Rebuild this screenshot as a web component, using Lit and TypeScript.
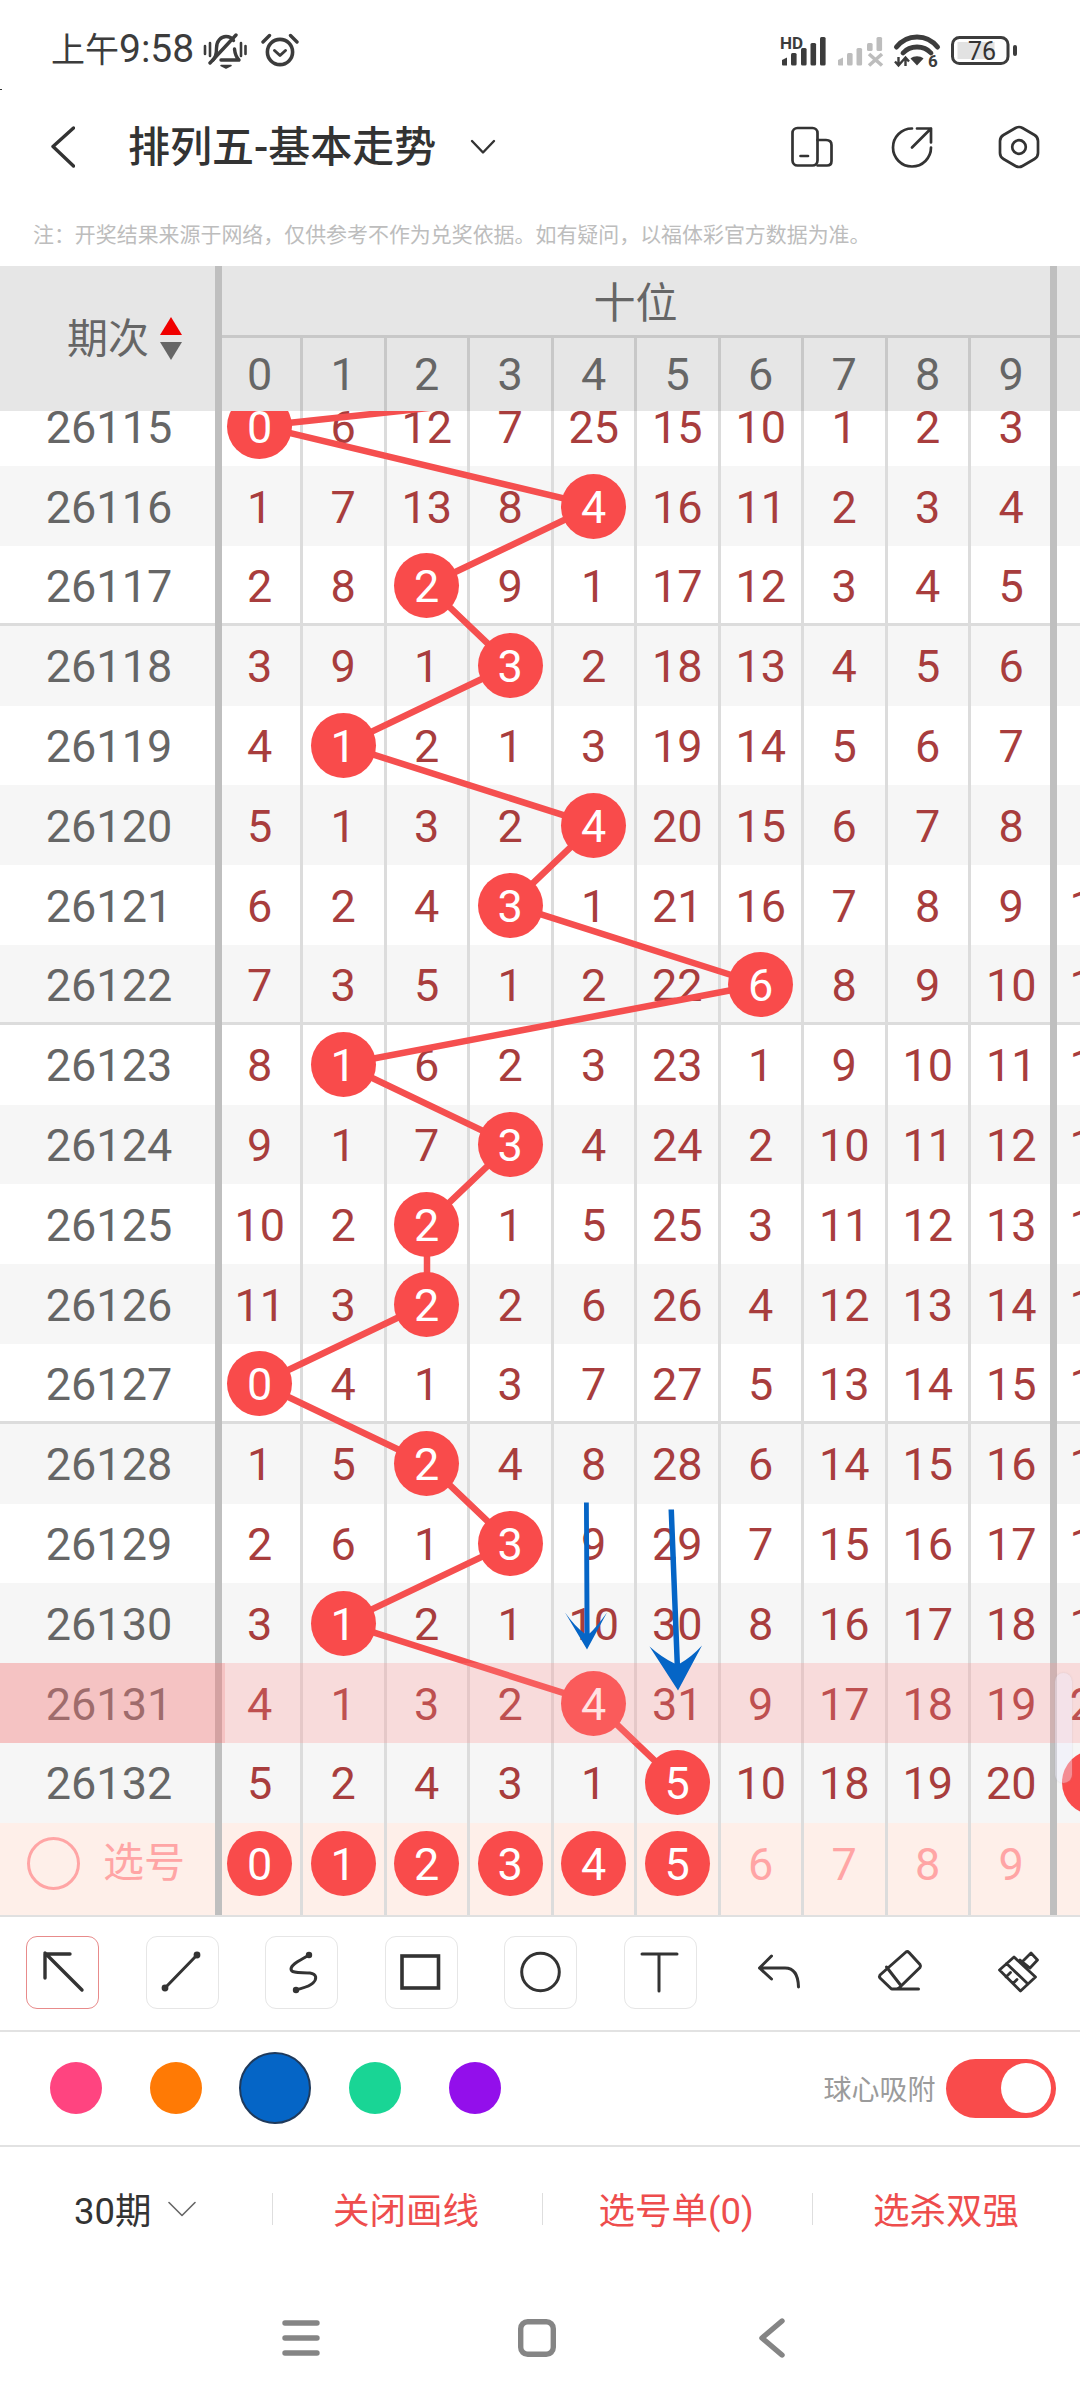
import { LitElement, html, css, svg } from "lit";
import { customElement } from "lit/decorators.js";

const ROW_H = 79.8;
const COL_W = 83.5;
const X0 = 260;
const data: number[][] = [
  [0, 6, 12, 7, 25, 15, 10, 1, 2, 3, 4],
  [1, 7, 13, 8, 4, 16, 11, 2, 3, 4, 5],
  [2, 8, 2, 9, 1, 17, 12, 3, 4, 5, 6],
  [3, 9, 1, 3, 2, 18, 13, 4, 5, 6, 7],
  [4, 1, 2, 1, 3, 19, 14, 5, 6, 7, 8],
  [5, 1, 3, 2, 4, 20, 15, 6, 7, 8, 9],
  [6, 2, 4, 3, 1, 21, 16, 7, 8, 9, 10],
  [7, 3, 5, 1, 2, 22, 6, 8, 9, 10, 11],
  [8, 1, 6, 2, 3, 23, 1, 9, 10, 11, 12],
  [9, 1, 7, 3, 4, 24, 2, 10, 11, 12, 13],
  [10, 2, 2, 1, 5, 25, 3, 11, 12, 13, 14],
  [11, 3, 2, 2, 6, 26, 4, 12, 13, 14, 15],
  [0, 4, 1, 3, 7, 27, 5, 13, 14, 15, 16],
  [1, 5, 2, 4, 8, 28, 6, 14, 15, 16, 17],
  [2, 6, 1, 3, 9, 29, 7, 15, 16, 17, 18],
  [3, 1, 2, 1, 10, 30, 8, 16, 17, 18, 19],
  [4, 1, 3, 2, 4, 31, 9, 17, 18, 19, 20],
  [5, 2, 4, 3, 1, 5, 10, 18, 19, 20, 0],
];
const balls = [0, 4, 2, 3, 1, 4, 3, 6, 1, 3, 2, 2, 0, 2, 3, 1, 4, 5];
const cx = (c: number) => X0 + COL_W * c;
const cy = (r: number) => ROW_H / 2 + ROW_H * r;

@customElement("app-root")
export class AppRoot extends LitElement {
  static styles = css`
    :host {
      display: block;
      position: relative;
      width: 1080px;
      height: 2400px;
      background: #fff;
      overflow: hidden;
      font-family: "Roboto", "Noto Sans CJK SC", sans-serif;
      color: #333;
    }
    svg { display: block; flex: none; }
    .speck { position: absolute; left: 0; top: 89px; width: 2px; height: 1px; background: #333; }

    .status { height: 90px; display: flex; align-items: flex-start; padding-top: 33px; box-sizing: border-box; }
    .time { margin-left: 51px; font-size: 34px; line-height: 33px; height: 33px; color: #3c3c3c; width: 152px; white-space: nowrap; }
    .time span { font-size: 39px; }
    .alarm { margin-left: 14px; }
    .stat-right { margin-left: auto; margin-right: 60px; }

    .nav { height: 114px; display: flex; align-items: center; position: relative; }
    .back { margin-left: 51px; }
    .title { margin-left: 53px; font-size: 42px; line-height: 50px; color: #333; width: 305px; white-space: nowrap; font-weight: 500; padding-top: 1px; }
    .caret { margin-left: 37px; }
    .nav-right { margin-left: auto; margin-right: 40px; display: flex; align-items: center; }
    .ico-share { margin-left: 58.5px; margin-right: 65px; }

    .note { height: 62px; display: flex; align-items: center; padding-left: 33px; font-size: 20.95px; color: #bdbdbd; white-space: nowrap; box-sizing: border-box; padding-bottom: 4px; }

    .head { height: 145px; display: flex; background: #e6e6e6; position: relative; z-index: 5; color: #666; }
    .hleft { width: 218px; flex: none; position: relative; display: flex; align-items: center; padding-left: 67px; box-sizing: border-box; }
    .hleft .lbl { font-size: 41px; line-height: 50px; width: 93px; }
    .sort { display: flex; flex-direction: column; gap: 7px; }
    .tri-up { width: 0; height: 0; border-left: 11px solid transparent; border-right: 11px solid transparent; border-bottom: 18px solid #f00000; }
    .tri-down { width: 0; height: 0; border-left: 11px solid transparent; border-right: 11px solid transparent; border-top: 18px solid #666; }
    .hright { display: grid; grid-template-columns: repeat(11, 83.5px); grid-template-rows: 72px 73px; }
    .sec { grid-column: 1 / 11; display: flex; align-items: center; justify-content: center; font-size: 42px; box-shadow: inset 0 -3px 0 #c8c8c8; padding-bottom: 5px; box-sizing: border-box; }
    .sec2 { grid-column: 11 / 12; box-shadow: inset 0 -3px 0 #c8c8c8; }
    .hnum { display: flex; align-items: center; justify-content: center; font-size: 45px; position: relative; }
    .hnum::after { content: ""; position: absolute; right: -1.5px; top: 0; bottom: 0; width: 3px; background: #c8c8c8; }
    .vbar::after { content: ""; position: absolute; right: -3.5px; top: 0; bottom: 0; width: 7px; background: #bfbfbf; z-index: 1; }
    .hvbar { position: absolute; left: 1050px; top: 0; bottom: 0; width: 7px; background: #bfbfbf; }

    .board { height: 1412px; overflow: hidden; position: relative; }
    .rows { position: relative; margin-top: -24.6px; width: 1136.5px; }
    .row { display: grid; grid-template-columns: 218px repeat(11, 83.5px); height: 79.8px; background: #fff; }
    .row.alt { background: #f6f6f6; }
    .row.grp { box-shadow: inset 0 -3px 0 #dcdcdc; }
    .period { position: relative; display: flex; align-items: center; justify-content: center; font-size: 45px; color: #666; padding-top: 2px; box-sizing: border-box; }
    .cell { position: relative; display: flex; align-items: center; justify-content: center; font-size: 45px; color: #a83d3d; padding-top: 2px; box-sizing: border-box; }
    .cell::after { content: ""; position: absolute; right: -1.5px; top: 0; bottom: 0; width: 3px; background: #dcdcdc; }
    .cell.vbar::after { right: -3.5px; width: 7px; background: #bfbfbf; }
    .cell.noline::after { display: none; }
    .ball { position: absolute; left: 50%; top: 50%; width: 65px; height: 65px; margin: -32.5px 0 0 -32.5px; border-radius: 50%; background: #f94b4b; color: #fff; display: flex; align-items: center; justify-content: center; z-index: 2; padding-top: 2px; box-sizing: border-box; }
    .lines { position: absolute; left: 0; top: 0; z-index: 1; pointer-events: none; }
    .hl { position: absolute; left: 0; top: 1276.8px; width: 1080px; height: 79.8px; background: rgba(255, 140, 140, 0.25); z-index: 3; }
    .hl-left { position: absolute; left: 0; top: 0; width: 224.5px; height: 100%; background: rgba(235, 100, 100, 0.2); }
    .arrows { position: absolute; left: 0; top: 0; z-index: 4; }
    .thumb { position: absolute; left: 1055px; top: 1287px; width: 17px; height: 110px; border-radius: 9px; background: rgba(238, 238, 255, 0.4); box-shadow: 0 0 2px rgba(160, 160, 170, 0.35); z-index: 4; }

    .select { height: 92px; display: grid; grid-template-columns: 218px repeat(11, 83.5px); width: 1136.5px; background: #feefe9; position: relative; z-index: 4; }
    .sleft { position: relative; display: flex; align-items: flex-start; padding: 14px 0 0 27px; box-sizing: border-box; color: #ffa5a5; font-size: 41px; }
    .radio { width: 53px; height: 53px; box-sizing: border-box; border: 3px solid #ffa5a5; border-radius: 50%; flex: none; }
    .slabel { margin-left: 23px; line-height: 53px; white-space: nowrap; }
    .scell { height: 92px; position: relative; font-size: 45px; color: #ffa5a5; }
    .scell::after { content: ""; position: absolute; right: -1.5px; top: 0; bottom: 0; width: 3px; background: #dcdcdc; }
    .scell.vbar::after { right: -3.5px; width: 7px; background: #bfbfbf; }
    .scell.noline::after { display: none; }
    .sinner { height: 80px; display: flex; align-items: center; justify-content: center; position: relative; padding-top: 2px; box-sizing: border-box; }

    .tools { height: 117px; box-sizing: border-box; border-top: 2px solid #e0e0e0; border-bottom: 2px solid #e2e2e2; display: flex; padding: 19px 0 0 2.75px; }
    .tool { width: 119.5px; flex: none; display: flex; justify-content: center; }
    .tbox { width: 73px; height: 73px; box-sizing: border-box; border: 1.5px solid #e6e6e6; border-radius: 11px; position: relative; }
    .tbox.on { border-color: #e88b8b; }
    .tbox svg { position: absolute; left: -1.5px; top: -1.5px; }
    .tplain { width: 73px; height: 73px; position: relative; }

    .colors { height: 115px; box-sizing: border-box; border-bottom: 2px solid #e2e2e2; display: flex; align-items: center; padding: 0 0 1px 26px; }
    .swatch { width: 99.7px; flex: none; display: flex; justify-content: center; }
    .dot { width: 52px; height: 52px; border-radius: 50%; }
    .dot.cur { width: 72px; height: 72px; box-sizing: border-box; border: 2px solid #1f3a5c; }
    .snap { margin-left: auto; margin-right: 24.5px; display: flex; align-items: center; gap: 10px; font-size: 28px; color: #9b9b9b; white-space: nowrap; }
    .toggle { width: 110px; height: 59px; border-radius: 30px; background: #f94b4b; position: relative; }
    .knob { position: absolute; right: 5px; top: 4.5px; width: 50px; height: 50px; border-radius: 50%; background: #fff; }
    .c1 { background: #ff4480; } .c2 { background: #ff7a05; } .c3 { background: #0565c6; } .c4 { background: #19d595; } .c5 { background: #930feb; }

    .tabs { height: 126px; display: flex; align-items: center; padding-bottom: 3px; box-sizing: border-box; }
    .tab { width: 270px; flex: none; height: 32px; display: flex; align-items: center; justify-content: center; font-size: 36.5px; color: #ee4d4d; box-sizing: border-box; white-space: nowrap; padding-right: 2px; }
    .tab + .tab { border-left: 1.5px solid #dedede; }
    .tab.count { color: #333; gap: 16px; width: 271.5px; }

    .sys { height: 130px; display: flex; align-items: center; justify-content: center; padding-right: 7px; box-sizing: border-box; }
    .sysitem { width: 235.5px; flex: none; display: flex; justify-content: center; }
  `;

  private statusIcons() {
    return html`
      <svg class="bell" width="44" height="36" viewBox="0 0 44 36" fill="none" stroke="#3c3c3c" stroke-width="3.4" stroke-linecap="round" stroke-linejoin="round">
        <path d="M10 27 C13 24 13.5 20 13.5 15 C13.5 8 18 3.5 23 3.5 C26.5 3.5 29 5 30.5 7.5" />
        <path d="M31.5 16 C32 21 33 24 36 27 H18" />
        <path d="M7 30 L33 2" />
        <path d="M18 32.5 H28 L23 35 Z" fill="#3c3c3c" stroke-width="1.5" />
        <path d="M2 13 V21 M7 10 V23 M38 10 V23 M42.5 13 V21" stroke-width="2.6" />
      </svg>
      <svg class="alarm" width="38" height="34" viewBox="0 0 38 34" fill="none" stroke="#3c3c3c" stroke-linecap="round" stroke-linejoin="round">
        <circle cx="19" cy="19" r="12.6" stroke-width="3.6" />
        <path d="M13.5 17.5 L19 22.5 L24.5 17.5" stroke-width="3" />
        <path d="M2 9 L8.5 2.5 M36 9 L29.5 2.5" stroke-width="3.4" />
      </svg>
      <svg class="stat-right" width="240" height="36" viewBox="781 32 240 36">
        <text x="781" y="48" font-family="Roboto" font-weight="700" font-size="17" fill="#3c3c3c">HD</text>
        <path fill="#3c3c3c" d="M783 59 L788 56.5 V64.5 H784 Q783 64.5 783 63.5 Z" />
        <rect x="792" y="52" width="5.6" height="12.5" rx="1.5" fill="#3c3c3c" />
        <rect x="802" y="47" width="5.6" height="17.5" rx="1.5" fill="#3c3c3c" />
        <rect x="811.5" y="42" width="5.6" height="22.5" rx="1.5" fill="#3c3c3c" />
        <rect x="821" y="36" width="5.6" height="28.5" rx="1.5" fill="#3c3c3c" />
        <g fill="#bdbdbd">
          <path d="M839 59 L844 56.5 V64.5 H840 Q839 64.5 839 63.5 Z" />
          <rect x="848" y="52" width="5.6" height="12.5" rx="1.5" />
          <rect x="857.5" y="47" width="5.6" height="17.5" rx="1.5" />
          <rect x="868" y="42" width="5.6" height="8" rx="1.5" />
          <rect x="877.5" y="36" width="5.6" height="14" rx="1.5" />
        </g>
        <path d="M870 53 L883 64.5 M883 53 L870 64.5" stroke="#bdbdbd" stroke-width="3.6" fill="none" />
        <g fill="none" stroke="#3c3c3c" stroke-linecap="round">
          <path d="M897.5 46 C908 32.5 928 32.5 938.5 46" stroke-width="5" />
          <path d="M904 52 C911 44 925 44 932 52" stroke-width="4.8" />
        </g>
        <path d="M911.5 57.5 C915 54.5 921 54.5 924.5 57.5 L918 64.5 Z" fill="#3c3c3c" />
        <path d="M899.5 56 V64 M896 60.5 L899.5 64.5 L903 60.5 M906.5 65 V57 M903 60.5 L906.5 56.5 L910 60.5" stroke="#3c3c3c" stroke-width="2.4" fill="none" />
        <text x="929" y="66" font-family="Roboto" font-weight="700" font-size="17" fill="#3c3c3c">6</text>
        <rect x="953.5" y="36.5" width="55.5" height="26" rx="7" fill="none" stroke="#3c3c3c" stroke-width="3" />
        <rect x="958.5" y="41" width="37" height="17" fill="#e2e2e2" />
        <rect x="1014" y="44" width="4" height="11" rx="2" fill="#3c3c3c" />
        <text x="983" y="58.5" text-anchor="middle" font-family="Roboto" font-size="25" fill="#333">76</text>
      </svg>
    `;
  }

  private navBar() {
    return html`
      <div class="nav">
        <svg class="back" width="24" height="42" viewBox="0 0 24 42" fill="none" stroke="#333" stroke-width="3.4" stroke-linecap="round" stroke-linejoin="round"><path d="M22.5 2 L2 20.5 L22.5 40" /></svg>
        <div class="title">排列五-基本走势</div>
        <svg class="caret" width="26" height="16" viewBox="0 0 26 16" fill="none" stroke="#333" stroke-width="2.4" stroke-linecap="round" stroke-linejoin="round"><path d="M2 2 L13 13.5 L24 2" /></svg>
        <div class="nav-right">
          <svg width="42" height="42" viewBox="0 0 42 42" fill="none" stroke="#333" stroke-width="2.7" stroke-linecap="round" stroke-linejoin="round">
            <rect x="1.5" y="2" width="25" height="37.5" rx="5" />
            <path d="M26.5 14 H35 Q40.5 14 40.5 19 V35 Q40.5 39.5 36 39.5 H26.5" />
            <path d="M9.5 30 H17" />
          </svg>
          <svg class="ico-share" width="42" height="42" viewBox="0 0 42 42" fill="none" stroke="#333" stroke-width="2.7" stroke-linecap="round" stroke-linejoin="round">
            <path d="M21 2.5 A19 19 0 1 0 40 21.5" />
            <path d="M21 21.5 L40 2.5 M26 2.5 H40 V16.5" />
          </svg>
          <svg width="42" height="44" viewBox="0 0 42 44" fill="none" stroke="#333" stroke-width="2.7" stroke-linecap="round" stroke-linejoin="round">
            <path d="M17.5 3 Q21 1 24.5 3 L36.5 10 Q40 12 40 16 V28 Q40 32 36.5 34 L24.5 41 Q21 43 17.5 41 L5.5 34 Q2 32 2 28 V16 Q2 12 5.5 10 Z" />
            <circle cx="21" cy="22" r="6.8" />
          </svg>
        </div>
      </div>
    `;
  }

  private header() {
    return html`
      <div class="head">
        <div class="hleft vbar">
          <div class="lbl">期次</div>
          <div class="sort"><div class="tri-up"></div><div class="tri-down"></div></div>
        </div>
        <div class="hright">
          <div class="sec">十位</div>
          <div class="sec2"></div>
          ${[0, 1, 2, 3, 4, 5, 6, 7, 8, 9].map(
            (n) => html`<div class="hnum">${n}</div>`
          )}
        </div>
        <div class="hvbar"></div>
      </div>
    `;
  }

  private board() {
    const last = balls.length - 1;
    const linePts = balls.map((b, i) => `${cx(b)},${cy(i)}`).join(" ");
    const startX = cx(9);
    const startY = cy(0) - ROW_H;
    return html`
      <div class="board">
        <div class="rows">
          ${data.map((vals, r) => {
            const n = 26115 + r;
            const alt = r % 2 === 1 || r === 16;
            const grp = r === 2 || r === 7 || r === 12;
            return html`
              <div class="row ${alt ? "alt" : ""} ${grp ? "grp" : ""}">
                <div class="period vbar">${n}</div>
                ${vals.map((v, c) => {
                  const isBall = c === balls[r];
                  const isEdge = c === 10 && r === last;
                  const cls = c === 9 ? "vbar" : c === 10 ? "noline" : "";
                  return html`<div class="cell ${cls}">
                    ${isBall || isEdge
                      ? html`<span class="ball">${v}</span>`
                      : v}
                  </div>`;
                })}
              </div>
            `;
          })}
          <svg class="lines" width="1136" height="1437" viewBox="0 0 1136 1437" fill="none">
            <polyline points="${startX},${startY} ${linePts}" stroke="#f54f4f" stroke-width="6.5" stroke-linejoin="round" />
          </svg>
          <div class="hl"><div class="hl-left"></div></div>
          <div class="thumb"></div>
          <svg class="arrows" width="1136" height="1437" viewBox="0 0 1136 1437">
            ${svg`<g transform="translate(0,-386.4)" fill="#0565c6">
              <path d="M584 1503 H588.8 L589.6 1634 Q597 1627 607 1613 L587 1650 L565 1613 Q575 1627 584.6 1634 Z" />
              <path d="M668.5 1510 H674 L680 1664 Q692 1657 702 1646 L678 1691 L649.5 1647 Q662 1658 674.5 1664 Z" />
            </g>`}
          </svg>
        </div>
      </div>
    `;
  }

  private selectRow() {
    return html`
      <div class="select">
        <div class="sleft vbar">
          <div class="radio"></div>
          <div class="slabel">选号</div>
        </div>
        ${[0, 1, 2, 3, 4, 5, 6, 7, 8, 9].map(
          (n) => html`<div class="scell ${n === 9 ? "vbar" : ""}">
            <div class="sinner">${n < 6 ? html`<span class="ball">${n}</span>` : n}</div>
          </div>`
        )}
        <div class="scell noline"></div>
      </div>
    `;
  }

  private tools() {
    const icon = (content: unknown) => html`<svg width="73" height="73" viewBox="0 0 73 73" fill="none" stroke="#333" stroke-width="3" stroke-linecap="round" stroke-linejoin="round">${content}</svg>`;
    return html`
      <div class="tools">
        <div class="tool"><div class="tbox on">${icon(svg`<path d="M19 17 L56 54 M44 18 H19 V42" stroke-width="3.4" />`)}</div></div>
        <div class="tool"><div class="tbox">${icon(svg`<path d="M52 19 L20 52" /><circle cx="52" cy="19" r="3.4" fill="#333" stroke="none" /><circle cx="20" cy="52" r="3.4" fill="#333" stroke="none" />`)}</div></div>
        <div class="tool"><div class="tbox">${icon(svg`<path d="M44 19 C36 24 26 28 26 33 C26 38 38 36 45 37 C52 38 52 43 48 47 C44 51 37 52 31 54" /><circle cx="44" cy="19" r="3.2" fill="#333" stroke="none" /><circle cx="31" cy="54" r="3.2" fill="#333" stroke="none" />`)}</div></div>
        <div class="tool"><div class="tbox">${icon(svg`<rect x="18" y="20" width="36.5" height="32" stroke-width="3.6" stroke-linecap="butt" stroke-linejoin="miter" />`)}</div></div>
        <div class="tool"><div class="tbox">${icon(svg`<circle cx="36.5" cy="36" r="18.8" />`)}</div></div>
        <div class="tool"><div class="tbox">${icon(svg`<path d="M19 18 H54 M36 18 V55" />`)}</div></div>
        <div class="tool"><div class="tplain">${icon(svg`<path d="M28.5 20 L16.5 32 L28.5 43 M16.5 32 H42 Q55 32 55.5 51" />`)}</div></div>
        <div class="tool"><div class="tplain">${icon(svg`<path d="M43 16 Q44.5 15 46 16.5 L57 28.5 Q58 30 57 31.5 L36 52 Q33 53.5 31 53 H28.5 L17 42 Q16 40.5 17 39 Z M23.5 31 L37.5 49 M29 53 H55.5" />`)}</div></div>
        <div class="tool"><div class="tplain">${icon(svg`<path d="M17.5 34 L32 21 L53.5 41 L38.5 55 Z M24.5 27.5 L46 48 M38 24 L48 32 L55.5 24 L49 17 L41 25 M24 41 L28.5 36.5 M31 47.5 L35 43.5" stroke-width="2.8" />`)}</div></div>
      </div>
    `;
  }

  private colors() {
    return html`
      <div class="colors">
        <div class="swatch"><div class="dot c1"></div></div>
        <div class="swatch"><div class="dot c2"></div></div>
        <div class="swatch"><div class="dot c3 cur"></div></div>
        <div class="swatch"><div class="dot c4"></div></div>
        <div class="swatch"><div class="dot c5"></div></div>
        <div class="snap">球心吸附<div class="toggle"><div class="knob"></div></div></div>
      </div>
    `;
  }

  private tabs() {
    return html`
      <div class="tabs">
        <div class="tab count">
          <span>30期</span>
          <svg width="28" height="16" viewBox="0 0 28 16" fill="none" stroke="#666" stroke-width="1.6" stroke-linecap="round" stroke-linejoin="round"><path d="M1 1.5 L14 14.5 L27 1.5" /></svg>
        </div>
        <div class="tab">关闭画线</div>
        <div class="tab">选号单(0)</div>
        <div class="tab">选杀双强</div>
      </div>
    `;
  }

  private sys() {
    return html`
      <div class="sys">
        <div class="sysitem">
          <svg width="38" height="36" viewBox="0 0 38 36" fill="none" stroke="#858585" stroke-width="5.4" stroke-linecap="round"><path d="M3 3 H35 M3 18 H35 M3 33 H35" /></svg>
        </div>
        <div class="sysitem">
          <svg width="38" height="38" viewBox="0 0 38 38" fill="none" stroke="#858585" stroke-width="5.4"><rect x="2.7" y="2.7" width="32.6" height="32.6" rx="7" /></svg>
        </div>
        <div class="sysitem">
          <svg width="26" height="40" viewBox="0 0 26 40" fill="none" stroke="#858585" stroke-width="5.4" stroke-linecap="round" stroke-linejoin="round"><path d="M23 3 L3 20 L23 37" /></svg>
        </div>
      </div>
    `;
  }

  render() {
    return html`
      <div class="speck"></div>
      <div class="status">
        <div class="time">上午<span>9:58</span></div>
        ${this.statusIcons()}
      </div>
      ${this.navBar()}
      <div class="note">注：开奖结果来源于网络，仅供参考不作为兑奖依据。如有疑问，以福体彩官方数据为准。</div>
      ${this.header()} ${this.board()} ${this.selectRow()} ${this.tools()} ${this.colors()} ${this.tabs()} ${this.sys()}
    `;
  }
}
